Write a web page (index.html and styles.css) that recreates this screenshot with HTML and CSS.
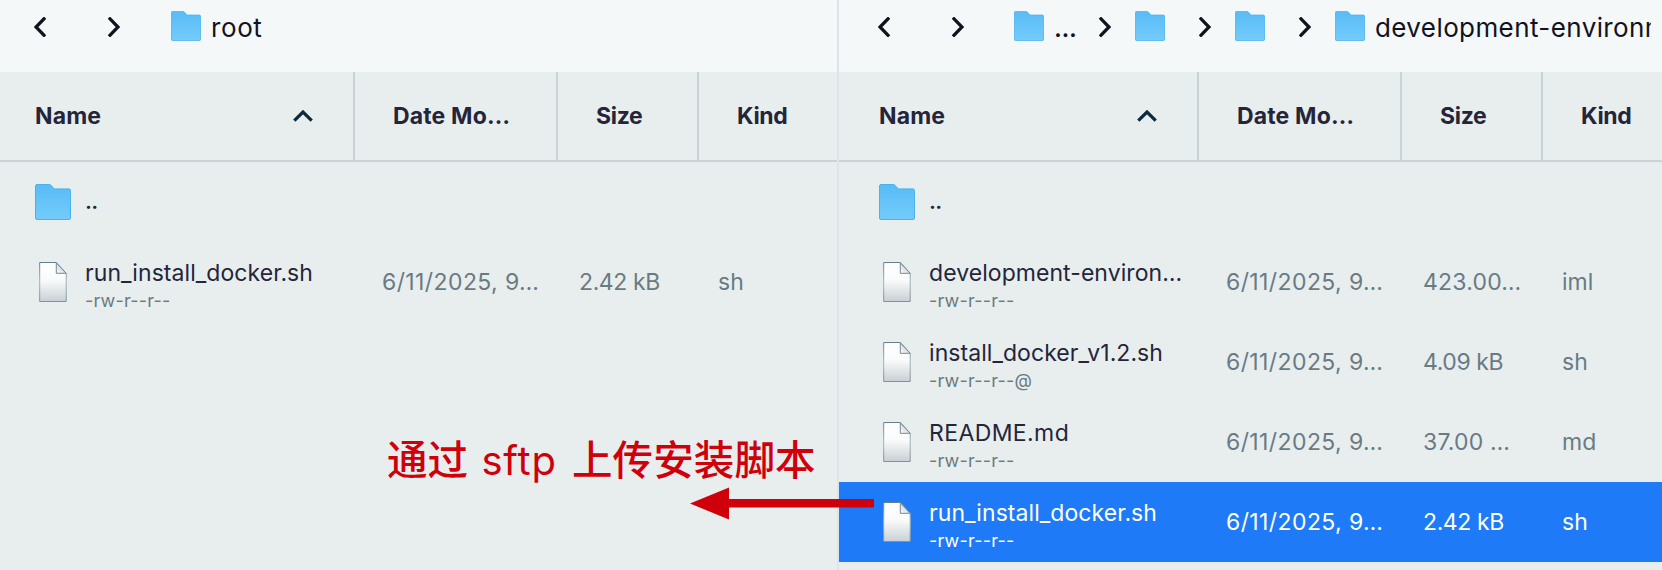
FILE: index.html
```html
<!DOCTYPE html>
<html lang="zh">
<head>
<meta charset="utf-8">
<title>SFTP</title>
<link rel="stylesheet" href="styles.css">
</head>
<body>
<svg class="defs" aria-hidden="true">
  <defs>
    <linearGradient id="folder-fill" x1="0" y1="0" x2="0" y2="1"><stop offset="0" stop-color="#58bcf6"/><stop offset="1" stop-color="#74cbfb"/></linearGradient>
    <linearGradient id="file-fill" x1="0" y1="0" x2="0" y2="1"><stop offset="0" stop-color="#fff"/><stop offset=".45" stop-color="#fafbfb"/><stop offset="1" stop-color="#c8d0d6"/></linearGradient>
    <linearGradient id="file-edge" x1="0" y1="0" x2="0" y2="1"><stop offset="0" stop-color="#64808e"/><stop offset=".5" stop-color="#a3b4bd"/><stop offset="1" stop-color="#7f939e"/></linearGradient>
    <linearGradient id="fold-fill" x1="0" y1="1" x2="1" y2="0"><stop offset="0" stop-color="#fff"/><stop offset="1" stop-color="#a9bac3"/></linearGradient>
    <symbol id="folder" viewBox="0 0 36 36"><path d="M2 .5H14.2Q15.2 .5 16 1.3L18.6 4.2Q19.2 4.9 20.2 4.9H34Q35.5 4.9 35.5 6.4V34Q35.5 35.5 34 35.5H2Q.5 35.5 .5 34V2Q.5 .5 2 .5Z" fill="url(#folder-fill)" stroke="#4bb2ee"/></symbol>
    <symbol id="file" viewBox="0 0 28 40"><path d="M.7 .5H17.3L27.2 11.3V39.5H.7Z" fill="url(#file-fill)" stroke="url(#file-edge)"/><path d="M17.3 .8V11.3H27.2Z" fill="url(#fold-fill)" stroke="#718b98"/></symbol>
    <symbol id="next" viewBox="0 0 12 20"><path d="M2 1.8L10 10L2 18.2" fill="none" stroke="#12121f" stroke-width="3.3" stroke-linecap="square"/></symbol>
    <symbol id="prev" viewBox="0 0 12 20"><path d="M10 1.8L2 10L10 18.2" fill="none" stroke="#12121f" stroke-width="3.3" stroke-linecap="square"/></symbol>
    <symbol id="up" viewBox="0 0 20 12"><path d="M1.3 10.7L10 2L18.7 10.7" fill="none" stroke="#0d2a3f" stroke-width="3.2"/></symbol>
  </defs>
</svg>
<main class="app">
  <section class="pane pane-remote">
    <nav class="crumbs">
      <svg class="chev"><use href="#prev"/></svg>
      <svg class="chev forward"><use href="#next"/></svg>
      <svg class="crumb-folder"><use href="#folder"/></svg>
      <span class="crumb-name root">root</span>
    </nav>
    <div class="grid head">
      <div class="cell">Name<svg class="sort"><use href="#up"/></svg></div><div class="cell">Date Mo…</div><div class="cell size">Size</div><div class="cell kind-head">Kind</div>
    </div>
    <div class="row grid">
      <div class="entry"><svg class="folder"><use href="#folder"/></svg><span class="parent">..</span></div>
    </div>
    <div class="row grid">
      <div class="entry"><svg class="file"><use href="#file"/></svg><div><p class="name">run_install_docker.sh</p><p class="perm">-rw-r--r--</p></div></div>
      <span class="date">6/11/2025, 9…</span><span class="kb">2.42 kB</span><span class="kind">sh</span>
    </div>
  </section>
  <section class="pane pane-local">
    <nav class="crumbs">
      <svg class="chev"><use href="#prev"/></svg>
      <svg class="chev forward"><use href="#next"/></svg>
      <svg class="crumb-folder"><use href="#folder"/></svg>
      <span class="crumb-name dots">...</span>
      <svg class="chev sep"><use href="#next"/></svg>
      <svg class="crumb-folder mid"><use href="#folder"/></svg>
      <svg class="chev sep-wide"><use href="#next"/></svg>
      <svg class="crumb-folder mid"><use href="#folder"/></svg>
      <svg class="chev sep-wide"><use href="#next"/></svg>
      <svg class="crumb-folder mid"><use href="#folder"/></svg>
      <span class="crumb-name last">development-environment</span>
    </nav>
    <div class="grid head">
      <div class="cell">Name<svg class="sort"><use href="#up"/></svg></div><div class="cell">Date Mo…</div><div class="cell size">Size</div><div class="cell kind-head">Kind</div>
    </div>
    <div class="row grid">
      <div class="entry"><svg class="folder"><use href="#folder"/></svg><span class="parent">..</span></div>
    </div>
    <div class="row grid">
      <div class="entry"><svg class="file"><use href="#file"/></svg><div><p class="name">development-environ…</p><p class="perm">-rw-r--r--</p></div></div>
      <span class="date">6/11/2025, 9…</span><span class="long">423.00…</span><span class="kind">iml</span>
    </div>
    <div class="row grid">
      <div class="entry"><svg class="file"><use href="#file"/></svg><div><p class="name">install_docker_v1.2.sh</p><p class="perm">-rw-r--r--@</p></div></div>
      <span class="date">6/11/2025, 9…</span><span class="kb">4.09 kB</span><span class="kind">sh</span>
    </div>
    <div class="row grid">
      <div class="entry"><svg class="file"><use href="#file"/></svg><div><p class="name readme">README.md</p><p class="perm">-rw-r--r--</p></div></div>
      <span class="date">6/11/2025, 9…</span><span class="long">37.00 …</span><span class="kind">md</span>
    </div>
    <div class="row grid selected">
      <div class="entry"><svg class="file"><use href="#file"/></svg><div><p class="name">run_install_docker.sh</p><p class="perm">-rw-r--r--</p></div></div>
      <span class="date">6/11/2025, 9…</span><span class="kb">2.42 kB</span><span class="kind">sh</span>
    </div>
  </section>
  <div class="note">通过 <span class="latin">sftp</span> 上传安装脚本</div>
  <svg class="arrow" viewBox="0 0 184 33"><path d="M0 16.5L39 .5V12H184V20.5H39V32.5Z" fill="#d0000b"/></svg>
</main>
</body>
</html>
```
FILE: styles.css
```css
* { box-sizing: border-box; }
body { margin: 0; font-family: Inter, "Noto Sans CJK SC", sans-serif; background: #e8eeee; }
p { margin: 0; }
svg { display: block; flex: none; }
.defs { position: absolute; width: 0; height: 0; }

.app { position: relative; display: flex; width: 1662px; height: 570px; overflow: hidden; }
.pane { flex: none; height: 570px; background: #e8eeee; overflow: hidden; }
.pane-remote { width: 839px; border-right: 2px solid #dfe4ea; }
.pane-local { width: 823px; }
.pane-local .crumbs, .pane-local .grid { padding-left: 5px; }

.crumbs { display: flex; height: 72px; padding-top: 11px; background: #f4f8f9; overflow: hidden; color: #12121f; }
.pane-local .crumbs { padding-right: 11px; }
.chev { width: 12px; height: 20px; margin: 6px 0 0 34px; }
.forward { margin-left: 62px; }
.crumb-folder { width: 30px; height: 30px; margin-left: 51px; }
.pane-local .forward + .crumb-folder { margin-left: 50px; }
.crumb-name { flex: 1; min-width: 0; overflow: hidden; white-space: nowrap; font-size: 26px; line-height: 34px; }
.root { margin-left: 10px; letter-spacing: .6px; }
.dots { flex: none; width: 30px; margin-left: 10px; letter-spacing: -.4px; font-weight: 500; }
.chev.sep { margin-left: 15px; }
.crumb-folder.mid { margin-left: 24px; }
.chev.sep-wide { margin-left: 34px; }
.last { margin-left: 10px; letter-spacing: .4px; }

.grid { display: grid; grid-template-columns: 355px 203px 141px 1fr; }
.head { height: 90px; border-bottom: 2px solid #c9d3d8; color: #25253a; font-size: 23px; font-weight: 650; }
.cell { display: flex; align-items: center; justify-content: space-between; padding-left: 38px; border-right: 2px solid #c9d3d8; white-space: nowrap; letter-spacing: .15px; }
.cell:first-child { padding-left: 35px; padding-right: 40px; }
.cell:last-child { border-right: 0; }
.size, .kind-head { letter-spacing: -.3px; }
.sort { width: 20px; height: 12px; }

.row { height: 80px; color: #687b84; font-size: 23px; line-height: 28px; white-space: nowrap; }
.row > span { padding-top: 26px; }
.entry { display: flex; padding-left: 35px; }
.folder { width: 36px; height: 36px; margin-top: 22px; }
.parent { margin: 25px 0 0 14px; color: #25253a; font-weight: 500; letter-spacing: -.6px; }
.file { width: 28px; height: 40px; margin: 20px 18px 0 4px; }
.name { margin-top: 17px; color: #25253a; letter-spacing: .06px; }
.readme { letter-spacing: .4px; }
.perm { font-size: 18px; line-height: 22px; margin-top: 3px; letter-spacing: .2px; }
.date { padding-left: 27px; letter-spacing: .4px; }
.kb, .long { padding-left: 21px; }
.kb { letter-spacing: -.4px; }
.long { letter-spacing: .2px; }
.kind { padding-left: 19px; }
.selected { background: #1e7af6; }
.selected, .selected .name { color: #fff; }

.note { position: absolute; left: 387px; top: 428px; color: #d0000b; font: 500 40.5px/60px "Noto Sans CJK SC", sans-serif; letter-spacing: .1px; white-space: nowrap; }
.latin { font-family: Inter, sans-serif; font-size: 40px; font-weight: 400; letter-spacing: .8px; margin: 0 6px 0 4px; }
.arrow { position: absolute; left: 690px; top: 487px; width: 184px; height: 33px; }
```
